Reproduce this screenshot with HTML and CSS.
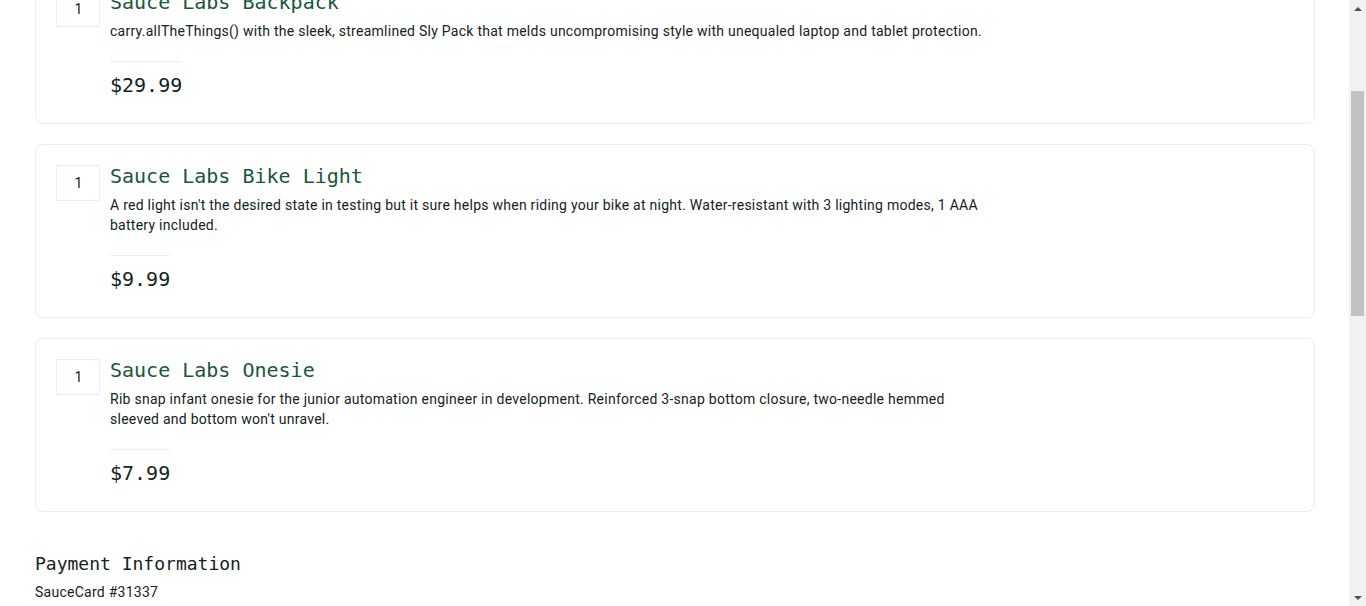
FILE: index.html
```html
<!DOCTYPE html>
<html lang="en">
<head>
<meta charset="utf-8">
<title>Swag Labs</title>
<link rel="stylesheet" href="styles.css">
</head>
<body>
<div class="page">
  <header class="primary-header">
    <div class="burger">
      <svg width="24" height="24" viewBox="0 0 24 24"><path d="M3 6h18M3 12h18M3 18h18" stroke="#132322" stroke-width="2"/></svg>
    </div>
    <div class="app-logo">Swag Labs</div>
    <div class="cart-link">
      <svg width="24" height="24" viewBox="0 0 24 24"><path d="M2 3h3l3 12h11l2-8H7" fill="none" stroke="#132322" stroke-width="2"/><circle cx="9" cy="19" r="1.6" fill="#132322"/><circle cx="18" cy="19" r="1.6" fill="#132322"/></svg>
    </div>
  </header>
  <div class="secondary-header">
    <span class="page-title">Checkout: Overview</span>
  </div>

  <main class="checkout">
    <div class="cart-labels">
      <span class="label-qty">QTY</span>
      <span class="label-desc">Description</span>
    </div>

    <div class="cart-item">
      <div class="qty">1</div>
      <div class="item-label">
        <div class="item-name">Sauce Labs Backpack</div>
        <div class="item-desc">carry.allTheThings() with the sleek, streamlined Sly Pack that melds uncompromising style with unequaled laptop and tablet protection.</div>
        <div class="pricebar">$29.99</div>
      </div>
    </div>

    <div class="cart-item">
      <div class="qty">1</div>
      <div class="item-label">
        <div class="item-name">Sauce Labs Bike Light</div>
        <div class="item-desc">A red light isn't the desired state in testing but it sure helps when riding your bike at night. Water-resistant with 3 lighting modes, 1 AAA battery included.</div>
        <div class="pricebar">$9.99</div>
      </div>
    </div>

    <div class="cart-item">
      <div class="qty">1</div>
      <div class="item-label">
        <div class="item-name">Sauce Labs Onesie</div>
        <div class="item-desc">Rib snap infant onesie for the junior automation engineer in development. Reinforced 3-snap bottom closure, two-needle hemmed sleeved and bottom won't unravel.</div>
        <div class="pricebar">$7.99</div>
      </div>
    </div>

    <section class="summary">
      <div class="summary-label">Payment Information</div>
      <div class="summary-value">SauceCard #31337</div>
      <div class="summary-label">Shipping Information</div>
      <div class="summary-value">Free Pony Express Delivery!</div>
      <div class="summary-label">Price Total</div>
      <div class="summary-value">Item total: $47.97</div>
      <div class="summary-value">Tax: $3.84</div>
      <div class="summary-total">Total: $51.81</div>
      <div class="buttons">
        <button class="btn btn-cancel">Cancel</button>
        <button class="btn btn-finish">Finish</button>
      </div>
    </section>
  </main>

  <footer class="footer">
    <div class="social">
      <span class="social-item">Twitter</span>
      <span class="social-item">Facebook</span>
      <span class="social-item">LinkedIn</span>
    </div>
    <div class="copy">© 2025 Sauce Labs. All Rights Reserved. Terms of Service | Privacy Policy</div>
  </footer>
</div>

<div class="scrollbar" aria-hidden="true">
  <div class="sb-button"><span class="sb-arrow-up"></span></div>
  <div class="sb-track"><div class="sb-thumb"></div></div>
  <div class="sb-button"><span class="sb-arrow-down"></span></div>
</div>
<script src="script.js"></script>
</body>
</html>
```
FILE: styles.css
```css
* { box-sizing: border-box; }
html, body { margin: 0; padding: 0; }
body {
  background: #ffffff;
  color: #132322;
  font-family: Roboto, "Liberation Sans", sans-serif;
}
.page { margin-right: 17px; }

.primary-header {
  height: 64px;
  display: flex;
  align-items: center;
  justify-content: space-between;
  padding: 0 35px;
  border-bottom: 1px solid #ededef;
}
.app-logo {
  font-family: "DejaVu Sans Mono", monospace;
  font-size: 24px;
}
.secondary-header {
  height: 56px;
  display: flex;
  align-items: center;
  padding: 0 35px;
}
.page-title {
  font-family: "DejaVu Sans Mono", monospace;
  font-size: 18px;
}

.checkout {
  padding: 10px 34px 0 35px;
}
.cart-labels {
  height: 40px;
  display: flex;
  align-items: center;
  font-size: 14px;
}
.label-qty { width: 75px; }

.cart-item {
  display: flex;
  align-items: flex-start;
  border: 1px solid #ededef;
  border-radius: 8px;
  padding: 20px;
  margin-bottom: 20px;
}
.qty {
  flex: none;
  width: 44px;
  height: 36px;
  margin-right: 10px;
  border: 1px solid #ededef;
  display: flex;
  align-items: center;
  justify-content: center;
  font-size: 14px;
  padding-left: 1px;
}
.item-label { flex: 1; }
.item-name {
  font-family: "DejaVu Sans Mono", monospace;
  font-size: 20px;
  line-height: 22px;
  color: #18583a;
}
.item-desc {
  margin-top: 8px;
  font-size: 14px;
  line-height: 20px;
  letter-spacing: 0.26px;
  max-width: 885px;
}
.pricebar {
  width: fit-content;
  margin-top: 20px;
  border-top: 1px solid #ededef;
  padding: 11px 0 6px;
  font-family: "DejaVu Sans Mono", monospace;
  font-size: 20px;
  line-height: 24px;
  font-weight: 500;
}

.summary {
  padding-top: 20px;
  padding-bottom: 120px;
}
.summary-label {
  margin-top: 20px;
  font-family: "DejaVu Sans Mono", monospace;
  font-size: 18px;
  line-height: 24px;
}
.summary-label:first-child { margin-top: 0; }
.summary-value {
  margin-top: 6px;
  font-size: 14px;
  line-height: 20px;
  letter-spacing: 0.26px;
}
.summary-total {
  margin-top: 10px;
  font-size: 16px;
  line-height: 24px;
  font-weight: bold;
}
.buttons {
  margin-top: 40px;
  display: flex;
  justify-content: space-between;
}
.btn {
  width: 160px;
  height: 48px;
  border-radius: 4px;
  font-size: 16px;
  font-family: inherit;
}
.btn-cancel { background: #f3f3f3; border: 1px solid #132322; color: #132322; }
.btn-finish { background: #3ddc91; border: none; color: #132322; }

.footer {
  background: #132322;
  color: #ffffff;
  padding: 40px 35px;
  min-height: 210px;
  font-size: 14px;
}
.social { display: flex; gap: 20px; margin-bottom: 30px; }

/* window scrollbar drawn over the right edge */
.scrollbar {
  position: fixed;
  top: 0;
  right: 0;
  width: 17px;
  height: 100vh;
  background: #f1f1f1;
  display: flex;
  flex-direction: column;
}
.sb-button {
  flex: none;
  height: 17px;
  display: flex;
  align-items: center;
  justify-content: center;
}
.sb-arrow-up {
  width: 0; height: 0;
  border-left: 4px solid transparent;
  border-right: 4px solid transparent;
  border-bottom: 4px solid #505050;
}
.sb-arrow-down {
  width: 0; height: 0;
  border-left: 4px solid transparent;
  border-right: 4px solid transparent;
  border-top: 4px solid #505050;
}
.sb-track {
  flex: 1;
  padding: 74px 2px 0;
}
.sb-thumb {
  height: 225px;
  background: #c1c1c1;
}
```
FILE: script.js
```js
window.scrollTo(0, 200);
window.addEventListener('load', function () { window.scrollTo(0, 200); });
```
